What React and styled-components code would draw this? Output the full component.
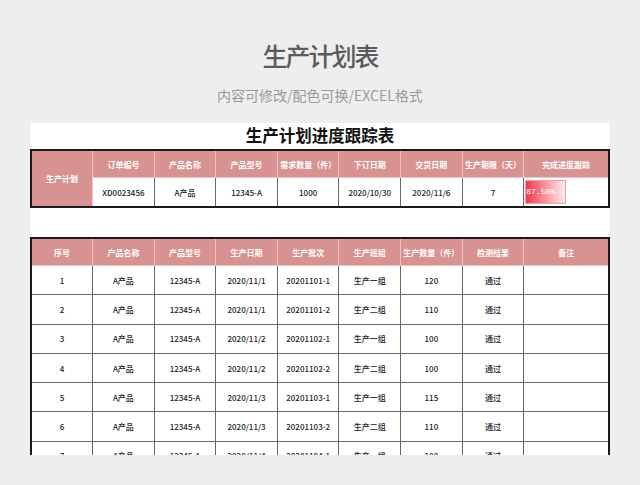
import React from "react";
import styled, { createGlobalStyle } from "styled-components";

const GlobalStyle = createGlobalStyle`
  body {
    margin: 0;
    background: #eeeeee;
    font-family: "Noto Sans CJK SC", "Liberation Sans", sans-serif;
  }
`;

const plan = {
  heads: ["订单编号", "产品名称", "产品型号", "需求数量（件）", "下订日期", "交货日期", "生产期限（天）", "完成进度跟踪"],
  values: ["XD0023456", "A产品", "12345-A", "1000", "2020/10/30", "2020/11/6", "7"],
  progress: 87.5,
};

const detailHeads = ["序号", "产品名称", "产品型号", "生产日期", "生产批次", "生产班组", "生产数量（件）", "检测结果", "备注"];

const rows = [
  ["1", "A产品", "12345-A", "2020/11/1", "20201101-1", "生产一组", "120", "通过", ""],
  ["2", "A产品", "12345-A", "2020/11/1", "20201101-2", "生产二组", "110", "通过", ""],
  ["3", "A产品", "12345-A", "2020/11/2", "20201102-1", "生产一组", "100", "通过", ""],
  ["4", "A产品", "12345-A", "2020/11/2", "20201102-2", "生产二组", "100", "通过", ""],
  ["5", "A产品", "12345-A", "2020/11/3", "20201103-1", "生产一组", "115", "通过", ""],
  ["6", "A产品", "12345-A", "2020/11/3", "20201103-2", "生产二组", "110", "通过", ""],
  ["7", "A产品", "12345-A", "2020/11/4", "20201104-1", "生产一组", "100", "通过", ""],
];

const App = () => {
  return (
    <Page>
      <GlobalStyle />
      <Title>生产计划表</Title>
      <Subtitle>内容可修改/配色可换/EXCEL格式</Subtitle>
      <Sheet>
        <SheetTitle>生产计划进度跟踪表</SheetTitle>
        <Table>
          <Cols />
          <tbody>
            <tr>
              <HeadCell rowSpan={2} $h={26}>生产计划</HeadCell>
              {plan.heads.map((h) => (
                <HeadCell key={h} $h={26}>{h}</HeadCell>
              ))}
            </tr>
            <tr>
              {plan.values.map((v, i) => (
                <Cell key={i} $h={26}>{v}</Cell>
              ))}
              <ProgressCell $h={26}>
                <Bar>{plan.progress.toFixed(2)}%</Bar>
              </ProgressCell>
            </tr>
          </tbody>
        </Table>
        <Spacer />
        <Table>
          <Cols />
          <tbody>
            <tr>
              {detailHeads.map((h) => (
                <HeadCell key={h} $h={26}>{h}</HeadCell>
              ))}
            </tr>
            {rows.map((r) => (
              <tr key={r[0]}>
                {r.map((v, i) => (
                  <Cell key={i} $h={28.3}>{v}</Cell>
                ))}
              </tr>
            ))}
          </tbody>
        </Table>
      </Sheet>
    </Page>
  );
};

const Cols = () => (
  <colgroup>
    {Array.from({ length: 8 }).map((_, i) => (
      <col key={i} style={{ width: 61.6 }} />
    ))}
    <col />
  </colgroup>
);

const Page = styled.div`
  width: 640px;
  height: 485px;
  overflow: hidden;
  display: flex;
  flex-direction: column;
  align-items: center;
`;

const Title = styled.h1`
  margin: 39px 0 0;
  font-size: 25px;
  line-height: 32px;
  font-weight: 500;
  color: #5b5b5b;
  letter-spacing: -2px;
`;

const Subtitle = styled.div`
  margin-top: 14px;
  font-size: 14px;
  line-height: 20px;
  color: #9a9a9a;
`;

const Sheet = styled.div`
  margin-top: 18px;
  width: 580px;
  height: 332px;
  overflow: hidden;
  background: #ffffff;
  display: flex;
  flex-direction: column;
`;

const SheetTitle = styled.div`
  height: 26px;
  line-height: 22px;
  padding-top: 1px;
  box-sizing: border-box;
  text-align: center;
  font-size: 16.5px;
  font-weight: 700;
  color: #111;
  flex-shrink: 0;
`;

const Table = styled.table`
  width: 580px;
  table-layout: fixed;
  border-collapse: collapse;
  border: 2px solid #1a1a1a;
  flex-shrink: 0;
`;

const HeadCell = styled.td`
  height: ${(p) => p.$h}px;
  padding: 0;
  background: #d89292;
  color: #ffffff;
  font-size: 8px;
  font-weight: 700;
  text-align: center;
  border: 1px solid #ecc4c4;
  border-top: none;
`;

const Cell = styled.td`
  height: ${(p) => p.$h}px;
  padding: 0;
  background: #ffffff;
  color: #222;
  font-size: 8px;
  font-weight: 500;
  text-align: center;
  border: 1px solid #666;
  white-space: nowrap;
`;

const ProgressCell = styled(Cell)`
  text-align: left;
  padding: 1px 0 1px 1px;
`;

const Bar = styled.div`
  width: 41px;
  height: 24px;
  box-sizing: border-box;
  border: 1px solid #f4a0a8;
  background: linear-gradient(to right, #f23a48, #ffe4e8 95%);
  color: #fff;
  font-size: 8px;
  line-height: 22px;
  font-family: "Liberation Mono", monospace;
`;

const Spacer = styled.div`
  height: 29px;
  flex-shrink: 0;
`;

export default App;
